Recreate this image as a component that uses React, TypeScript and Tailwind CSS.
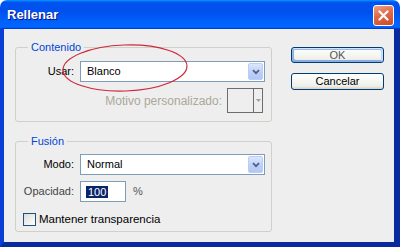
import { ReactNode } from "react";

function Chevron() {
  return (
    <svg width="8" height="6" viewBox="0 0 8 6" aria-hidden="true">
      <path d="M1 1.2 L4 4.2 L7 1.2" fill="none" stroke="#4d6185" strokeWidth="1.8" />
    </svg>
  );
}

function Select({ value }: { value: string }) {
  return (
    <div className="ml-[6px] flex h-[21px] w-[185px] items-center border border-[#7f9db9] bg-white">
      <span className="flex-1 pl-[6px]">{value}</span>
      <div className="mr-px flex h-[17px] w-[15px] items-center justify-center rounded-[2px] border border-[#b9cef7] bg-[linear-gradient(180deg,#dce6fd,#bccdf7_60%,#b3c7f5)]">
        <Chevron />
      </div>
    </div>
  );
}

function Button({ children, primary }: { children: ReactNode; primary?: boolean }) {
  return (
    <button
      className={
        "w-[93px] rounded-[3px] border border-[#003c74] bg-[linear-gradient(180deg,#ffffff,#f0f0ea_80%,#d6d0c5)] text-[11px] leading-none " +
        (primary
          ? "h-[16px] text-[#555] shadow-[inset_-1px_1px_#cee7ff,inset_1px_2px_#98b8ea,inset_-2px_2px_#bcd4f6,inset_1px_-1px_#89ade4,inset_2px_-2px_#89ade4]"
          : "h-[17px] text-black")
      }
    >
      {children}
    </button>
  );
}

function Group({ title, children }: { title: string; children: ReactNode }) {
  return (
    <fieldset className="rounded-[3px] border border-[#d0d0c8]">
      <legend className="ml-[12px] px-[3px] leading-[12px] text-[#0046d5]">{title}</legend>
      {children}
    </fieldset>
  );
}

export default function App() {
  return (
    <div className="h-[247px] w-[400px] bg-white font-['Liberation_Sans',Arial,sans-serif] text-[11px] text-black">
      <div className="relative flex h-full flex-col">
        {/* ── Title bar ── */}
        <div className="flex h-[29px] items-center justify-between rounded-t-[7px] bg-[linear-gradient(180deg,#0997ff_0%,#0053ee_8%,#0050ee_40%,#0066ff_88%,#0066ff_93%,#005bff_95%,#003dd7_96%,#003dd7_100%)] pl-[7px] pr-[6px]">
          <span className="pt-px text-[13px] font-bold text-white [text-shadow:1px_1px_0_#0f1089]">
            Rellenar
          </span>
          <div className="mt-[2px] flex h-[21px] w-[21px] items-center justify-center rounded-[3px] border border-white bg-[linear-gradient(160deg,#f0a185,#e06a48_45%,#cc4a2b)]">
            <svg width="11" height="11" viewBox="0 0 11 11" aria-hidden="true">
              <path d="M1.5 1.5 L9.5 9.5 M9.5 1.5 L1.5 9.5" stroke="white" strokeWidth="2.2" strokeLinecap="round" />
            </svg>
          </div>
        </div>

        {/* ── Body ── */}
        <div className="flex flex-1 border-b-[5px] border-l-[4px] border-r-[6px] border-b-[#0b2a9e] border-l-[#0a3ed6] border-r-[#0b2a9e] bg-[#eeeeee] pl-[11px] pt-[12px]">
          <div className="flex w-[257px] flex-col gap-[13px]">
            <Group title="Contenido">
              <div className="flex flex-col pb-[8px] pt-[8px]">
                <div className="flex items-center">
                  <span className="w-[58px] text-right">Usar:</span>
                  <Select value="Blanco" />
                </div>
                <div className="mt-[6px] flex items-center justify-end pr-[8px]">
                  <span className="text-[12px] text-[#aca899]">Motivo personalizado:</span>
                  <div className="ml-[5px] flex h-[25px] w-[36px] border border-[#6d6d6d]">
                    <div className="w-[26px] border-r border-[#6d6d6d]" />
                    <div className="flex flex-1 items-center justify-center">
                      <svg width="5" height="3" viewBox="0 0 5 3" aria-hidden="true">
                        <path d="M0 0 H5 L2.5 3 Z" fill="#a0a0a0" />
                      </svg>
                    </div>
                  </div>
                </div>
              </div>
            </Group>

            <Group title="Fusión">
              <div className="flex flex-col pb-[3px] pt-[7px]">
                <div className="flex items-center">
                  <span className="w-[58px] text-right">Modo:</span>
                  <Select value="Normal" />
                </div>
                <div className="mt-[6px] flex items-center">
                  <span className="w-[58px] text-right text-[#444]">Opacidad:</span>
                  <div className="ml-[6px] flex h-[21px] w-[46px] items-center border border-[#7f9db9] bg-white pl-[5px]">
                    <span className="bg-[#0a246a] px-[2px] leading-[12px] text-white">100</span>
                  </div>
                  <span className="ml-[7px] text-[#555]">%</span>
                </div>
                <label className="ml-[7px] mt-[9px] flex items-center gap-[3px]">
                  <span className="h-[13px] w-[13px] border border-[#1c5180] bg-[linear-gradient(135deg,#dcdcd7,#ffffff)]" />
                  <span className="text-[11.5px]">Mantener transparencia</span>
                </label>
              </div>
            </Group>
          </div>

          <div className="ml-[19px] flex flex-col gap-[10px] pt-[6px]">
            <Button primary>OK</Button>
            <Button>Cancelar</Button>
          </div>
        </div>

        {/* hand-drawn highlight over "Usar" */}
        <svg className="pointer-events-none absolute left-0 top-0" width="400" height="247" aria-hidden="true">
          <ellipse cx="125" cy="68" rx="62" ry="23" fill="none" stroke="#d0283a" strokeWidth="1.2" transform="rotate(-2 125 68)" />
        </svg>
      </div>
    </div>
  );
}
